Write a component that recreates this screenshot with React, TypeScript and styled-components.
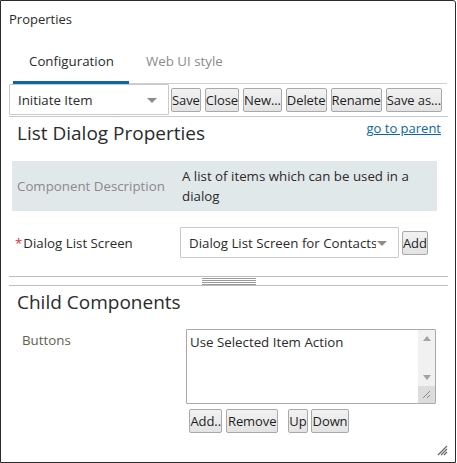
import React from "react";
import styled, { createGlobalStyle } from "styled-components";

const GlobalStyle = createGlobalStyle`
  html, body { margin: 0; padding: 0; background: #fff; }
  body {
    font-family: "Open Sans", "Noto Sans", "Liberation Sans", sans-serif;
    font-size: 13.3px;
    color: #2b2b2b;
  }
  * { box-sizing: border-box; }
`;

const Frame = styled.div`
  position: relative;
  width: 456px;
  height: 463px;
  border: 1px solid #2b2b2b;
  border-top-right-radius: 3px;
  padding: 0 7px 0 8px;
  display: flex;
  flex-direction: column;
`;

const Title = styled.div`
  height: 39px;
  line-height: 36px;
  font-size: 13px;
  color: #2b2b2b;
`;

const TabBar = styled.div`
  display: flex;
  margin-left: 4px;
  margin-right: 1px;
  border-bottom: 1px solid #cfcfcf;
  height: 44px;
`;

const Tab = styled.div<{ $active?: boolean }>`
  height: 44px;
  line-height: 42px;
  padding: 0 ${(p) => (p.$active ? "16px" : "17px")};
  width: ${(p) => (p.$active ? "116px" : "auto")};
  text-align: center;
  font-size: 13.3px;
  color: ${(p) => (p.$active ? "#2b2b2b" : "#8a8a8a")};
  border-bottom: ${(p) => (p.$active ? "3px solid #0b68a4" : "none")};
  margin-bottom: -1px;
  white-space: nowrap;
`;

const Toolbar = styled.div`
  display: flex;
  align-items: center;
  height: 33px;
  border-bottom: 1px solid #c8c8c8;
  padding-bottom: 1px;
`;

const SelectBox = styled.div<{ $w: number; $h: number }>`
  position: relative;
  width: ${(p) => p.$w}px;
  height: ${(p) => p.$h}px;
  border: 1px solid #c9c9c9;
  border-radius: 1px;
  background: #fff;
  display: flex;
  align-items: center;
  padding-left: 8px;
  padding-right: 22px;
  overflow: hidden;
  flex: none;
`;

const SelectText = styled.span`
  white-space: nowrap;
  overflow: hidden;
  flex: 1;
  color: #2b2b2b;
  font-size: 13.3px;
`;

const Arrow = styled.span`
  position: absolute;
  right: 11px;
  top: 50%;
  margin-top: -2px;
  width: 0;
  height: 0;
  border-left: 5px solid transparent;
  border-right: 5px solid transparent;
  border-top: 5px solid #8c8c8c;
`;

const Button = styled.button<{ $gap?: number; $pad?: number }>`
  height: 24px;
  margin-left: ${(p) => p.$gap ?? 4}px;
  padding: 0 ${(p) => p.$pad ?? 0}px;
  border: 1px solid #a9a9a9;
  border-radius: 2px;
  background: linear-gradient(#f2f2f2, #e3e3e3);
  font-family: "Open Sans", "Noto Sans", sans-serif;
  font-size: 13px;
  color: #1e1e1e;
  letter-spacing: -0.1px;
  white-space: nowrap;
  flex: none;
`;

const SectionHead = styled.div`
  display: flex;
  justify-content: space-between;
  align-items: flex-start;
  padding-left: 8px;
  padding-right: 7px;
  margin-top: 3px;
`;

const Heading = styled.div`
  font-size: 19px;
  line-height: 26px;
  color: #2b2b2b;
`;

const Link = styled.a`
  font-size: 13px;
  line-height: 18px;
  color: #0b68a4;
  text-decoration: underline;
  margin-top: -1px;
`;

const DescBox = styled.div`
  display: grid;
  grid-template-columns: 170px 1fr;
  align-items: center;
  background: #e1e8ea;
  margin: 15px 11px 0 3px;
  padding: 5px 0;
  height: 50px;
`;

const DescLabel = styled.div`
  padding-left: 5px;
  color: #8a8a8a;
`;

const DescValue = styled.div`
  line-height: 20px;
  color: #2b2b2b;
`;

const FormRow = styled.div<{ $top: number; $align?: string }>`
  display: flex;
  align-items: ${(p) => p.$align ?? "center"};
  margin-top: ${(p) => p.$top}px;
`;

const Label = styled.div<{ $w: number }>`
  width: ${(p) => p.$w}px;
  padding-left: 13px;
  line-height: 20px;
  color: #2b2b2b;
  flex: none;
`;

const FieldLabel = styled(Label)`
  color: #66604e;
  padding-top: 1px;
`;

const Req = styled.span`
  color: #d9302c;
  margin-left: -7px;
  margin-right: 1px;
`;

const Splitter = styled.div`
  margin-top: 18px;
  height: 10px;
  border-top: 1px solid #bdbdbd;
  border-bottom: 1px solid #bdbdbd;
  display: flex;
  align-items: center;
`;

const Grip = styled.div`
  margin-left: 193px;
  width: 54px;
  height: 7px;
  background: repeating-linear-gradient(
    to bottom,
    #9a9a9a 0,
    #9a9a9a 1px,
    #fff 1px,
    #fff 2px
  );
`;

const ListBox = styled.div`
  width: 250px;
  height: 75px;
  border: 1px solid #a9a9a9;
  border-radius: 1px;
  display: flex;
  flex: none;
`;

const ListContent = styled.div`
  flex: 1;
  padding: 2px 3px;
  line-height: 20px;
  color: #2b2b2b;
`;

const ScrollBar = styled.div`
  width: 17px;
  background: #f1f1f1;
  display: flex;
  flex-direction: column;
`;

const ScrollCell = styled.div<{ $bg?: string }>`
  height: 17px;
  display: flex;
  align-items: center;
  justify-content: center;
  background: ${(p) => p.$bg ?? "transparent"};
`;

const Spacer = styled.div`
  flex: 1;
`;

const ButtonRow = styled.div`
  display: flex;
  margin-top: 5px;
  margin-left: 179px;
`;

const Corner = styled.div`
  position: absolute;
  right: 7px;
  bottom: 9px;
  width: 11px;
  height: 11px;
`;

function Tri({ up }: { up?: boolean }) {
  return (
    <svg width="8" height="5" viewBox="0 0 8 5">
      <path d={up ? "M0 5 L4 0 L8 5 Z" : "M0 0 L4 5 L8 0 Z"} fill="#a3a3a3" />
    </svg>
  );
}

export default function App() {
  return (
    <>
      <GlobalStyle />
      <Frame>
        <Title>Properties</Title>
        <TabBar>
          <Tab $active>Configuration</Tab>
          <Tab>Web UI style</Tab>
        </TabBar>
        <Toolbar>
          <SelectBox $w={160} $h={31}>
            <SelectText>Initiate Item</SelectText>
            <Arrow />
          </SelectBox>
          <Button $gap={2}>Save</Button>
          <Button>Close</Button>
          <Button>New...</Button>
          <Button>Delete</Button>
          <Button>Rename</Button>
          <Button>Save as...</Button>
        </Toolbar>
        <SectionHead>
          <Heading>List Dialog Properties</Heading>
          <Link href="#">go to parent</Link>
        </SectionHead>
        <DescBox>
          <DescLabel>Component Description</DescLabel>
          <DescValue>
            A list of items which can be used in a
            <br />
            dialog
          </DescValue>
        </DescBox>
        <FormRow $top={16}>
          <Label $w={171}>
            <Req>*</Req>Dialog List Screen
          </Label>
          <SelectBox $w={219} $h={31}>
            <SelectText>Dialog List Screen for Contacts</SelectText>
            <Arrow />
          </SelectBox>
          <Button $gap={3}>Add</Button>
        </FormRow>
        <Splitter>
          <Grip />
        </Splitter>
        <SectionHead>
          <Heading>Child Components</Heading>
        </SectionHead>
        <FormRow $top={14} $align="flex-start">
          <FieldLabel $w={177}>Buttons</FieldLabel>
          <ListBox>
            <ListContent>Use Selected Item Action</ListContent>
            <ScrollBar>
              <ScrollCell>
                <Tri up />
              </ScrollCell>
              <Spacer />
              <ScrollCell>
                <Tri />
              </ScrollCell>
              <ScrollCell $bg="#dcdcdc">
                <svg width="9" height="9" viewBox="0 0 9 9">
                  <path d="M8 1 L1 8 M8 5 L5 8" stroke="#8a8a8a" strokeWidth="1" />
                </svg>
              </ScrollCell>
            </ScrollBar>
          </ListBox>
        </FormRow>
        <ButtonRow>
          <Button $gap={1} $pad={0.5}>Add..</Button>
          <Button $pad={0.5}>Remove</Button>
          <Button $gap={10} $pad={0.5}>Up</Button>
          <Button $gap={3} $pad={0.5}>Down</Button>
        </ButtonRow>
        <Corner>
          <svg width="11" height="11" viewBox="0 0 11 11">
            <path d="M10 1 L1 10 M10 4 L4 10 M10 7 L7 10" stroke="#666" strokeWidth="1.2" />
          </svg>
        </Corner>
      </Frame>
    </>
  );
}
